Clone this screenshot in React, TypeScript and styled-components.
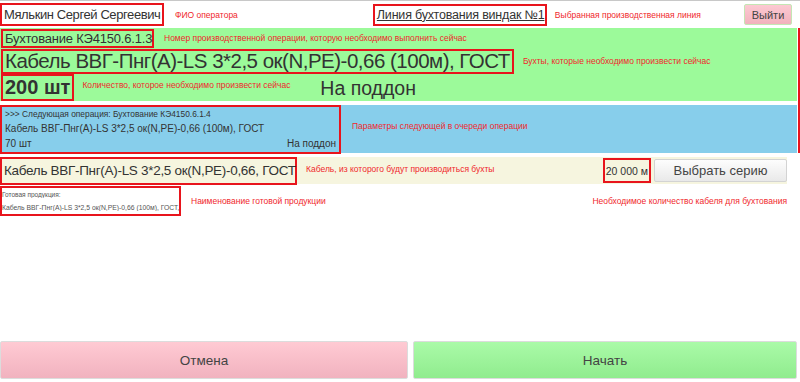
import React from 'react';
import styled, { createGlobalStyle } from 'styled-components';

const SANS = '"Liberation Sans", Arial, sans-serif';
const MARK = '#e8141c';

const GlobalStyle = createGlobalStyle`
  html, body {
    margin: 0;
    padding: 0;
    background: #fff;
  }
  body {
    font-family: ${SANS};
    color: #333;
  }
`;

const Page = styled.div`
  width: 800px;
  height: 382px;
  display: flex;
  flex-direction: column;
  box-sizing: border-box;
  border-top: 1px solid #c8c8c8;
  overflow: hidden;
`;

// red outline used by the annotations
const Marked = styled.div`
  box-sizing: border-box;
  border: 2px solid ${MARK};
  display: flex;
  flex-direction: column;
  justify-content: center;
  padding: 0 2px;
  flex-shrink: 0;
  white-space: nowrap;
`;

const Note = styled.span<{ $ml?: number; $mt?: number }>`
  font-family: ${SANS};
  font-size: 8.5px;
  color: #f0282c;
  white-space: nowrap;
  margin-left: ${p => p.$ml ?? 8}px;
  margin-top: ${p => p.$mt ?? 0}px;
`;

const RightNote = styled(Note)`
  margin-left: auto;
`;

const Header = styled.div`
  height: 25px;
  display: flex;
  align-items: center;
  padding-top: 1px;
`;

const Operator = styled(Marked)`
  font-size: 13px;
  letter-spacing: -0.4px;
  width: 164px;
  height: 23px;
`;

const LineName = styled(Marked)`
  font-size: 12.5px;
  letter-spacing: -0.2px;
  width: 174px;
  height: 22px;
  margin-left: 135px;
  text-decoration: underline;
`;

const ExitButton = styled.button`
  margin-left: auto;
  margin-right: 8px;
  width: 48px;
  height: 21px;
  font-family: ${SANS};
  font-size: 11px;
  color: #444;
  background: linear-gradient(#fcc9d2, #f2b2bd);
  border: 1px solid #c4e6b4;
  border-radius: 2px;
  padding: 0;
`;

const Panels = styled.div`
  display: flex;
  flex-direction: column;
  gap: 4px;
  margin-top: 1px;
  border-right: 2px solid ${MARK};
  padding-right: 1px;
`;

const GreenPanel = styled.div`
  background: #9cfa9a;
  height: 73px;
  display: flex;
  flex-direction: column;
  padding-left: 1px;
`;

const Row = styled.div<{ $h: number }>`
  height: ${p => p.$h}px;
  display: flex;
  align-items: center;
  flex-shrink: 0;
`;

const OperationCode = styled(Marked)`
  font-size: 13px;
  letter-spacing: -0.2px;
  width: 153px;
  height: 19px;
`;

const BigText = styled(Marked)<{ $bold?: boolean }>`
  font-size: ${p => (p.$bold ? 20 : 20.5)}px;
  letter-spacing: ${p => (p.$bold ? 0 : -0.5)}px;
  font-weight: ${p => (p.$bold ? 700 : 400)};
  height: ${p => (p.$bold ? 27 : 25)}px;
`;

const Destination = styled.span`
  font-size: 19.5px;
  margin-left: auto;
  margin-right: 381px;
  margin-top: 2px;
`;

const BluePanel = styled.div`
  background: #87ceeb;
  height: 48px;
  display: flex;
  align-items: center;
`;

const NextOp = styled(Marked)`
  width: 341px;
  height: 49px;
  justify-content: space-around;
  padding: 1px 3px;
`;

const SmallLine = styled.div<{ $size: number }>`
  font-size: ${p => p.$size}px;
  display: flex;
  justify-content: space-between;
`;

const BeigePanel = styled.div`
  width: 787px;
  height: 27px;
  background: #f6f5df;
  display: flex;
  align-items: center;
  margin-top: 4px;
`;

const SourceCable = styled(Marked)`
  font-size: 13.5px;
  letter-spacing: -0.3px;
  height: 28px;
  width: 297px;
`;

const Length = styled(Marked)`
  margin-left: auto;
  height: 25px;
  font-size: 10.5px;
  padding: 0 1px;
`;

const SeriesButton = styled.button`
  width: 133px;
  height: 23px;
  margin-left: 3px;
  font-family: ${SANS};
  font-size: 13px;
  color: #444;
  background: linear-gradient(#fdfdfd, #e9e9e9);
  border: 1px solid #d3d3d3;
  border-radius: 2px;
  padding: 0;
`;

const ProductRow = styled.div`
  display: flex;
  align-items: center;
  margin-top: 2px;
  width: 787px;
`;

const Product = styled(Marked)`
  width: 181px;
  height: 30px;
  padding: 0;
  justify-content: space-around;
  color: #555;
`;

const Tiny = styled.div<{ $size: number }>`
  font-size: ${p => p.$size}px;
  overflow: hidden;
`;

const Footer = styled.div`
  margin-top: auto;
  margin-bottom: 3px;
  display: flex;
  gap: 5px;
  padding-right: 3px;
`;

const ActionButton = styled.button<{ $kind: 'cancel' | 'start' }>`
  flex: ${p => (p.$kind === 'cancel' ? '0 0 408px' : '1')};
  height: 38px;
  font-family: ${SANS};
  font-size: 13.5px;
  color: #444;
  border: 1px solid #dcdcdc;
  border-radius: 2px;
  background: ${p =>
    p.$kind === 'cancel'
      ? 'linear-gradient(#ffcad3, #f1b2bf)'
      : 'linear-gradient(#aafaa8, #90ec8e)'};
`;

export default function App() {
  return (
    <>
      <GlobalStyle />
      <Page>
        <Header>
          <Operator>Мялькин Сергей Сергеевич</Operator>
          <Note $ml={11}>ФИО оператора</Note>
          <LineName>Линия бухтования виндак №1</LineName>
          <Note $ml={8}>Выбранная производственная линия</Note>
          <ExitButton>Выйти</ExitButton>
        </Header>

        <Panels>
          <GreenPanel>
            <Row $h={20}>
              <OperationCode>Бухтование КЭ4150.6.1.3</OperationCode>
              <Note $ml={10}>Номер производственной операции, которую необходимо выполнить сейчас</Note>
            </Row>
            <Row $h={26}>
              <BigText>Кабель ВВГ-Пнг(А)-LS 3*2,5 ок(N,PE)-0,66 (100м), ГОСТ</BigText>
              <Note $ml={9}>Бухты, которые необходимо произвести сейчас</Note>
            </Row>
            <Row $h={27}>
              <BigText $bold>200 шт</BigText>
              <Note $ml={8} $mt={-6}>Количество, которое необходимо произвести сейчас</Note>
              <Destination>На поддон</Destination>
            </Row>
          </GreenPanel>

          <BluePanel>
            <NextOp>
              <SmallLine $size={8.4}>&gt;&gt;&gt; Следующая операция: Бухтование КЭ4150.6.1.4</SmallLine>
              <SmallLine $size={10}>Кабель ВВГ-Пнг(А)-LS 3*2,5 ок(N,PE)-0,66 (100м), ГОСТ</SmallLine>
              <SmallLine $size={10}>
                <span>70 шт</span>
                <span>На поддон</span>
              </SmallLine>
            </NextOp>
            <Note $ml={11} $mt={-6}>Параметры следующей в очереди операции</Note>
          </BluePanel>
        </Panels>

        <BeigePanel>
          <SourceCable>Кабель ВВГ-Пнг(А)-LS 3*2,5 ок(N,PE)-0,66, ГОСТ</SourceCable>
          <Note $ml={9} $mt={-4}>Кабель, из которого будут производиться бухты</Note>
          <Length>20 000 м</Length>
          <SeriesButton>Выбрать серию</SeriesButton>
        </BeigePanel>

        <ProductRow>
          <Product>
            <Tiny $size={6.5}>Готовая продукция:</Tiny>
            <Tiny $size={6.8}>Кабель ВВГ-Пнг(А)-LS 3*2,5 ок(N,PE)-0,66 (100м), ГОСТ,</Tiny>
          </Product>
          <Note $ml={10}>Наименование готовой продукции</Note>
          <RightNote>Необходимое количество кабеля для бухтования</RightNote>
        </ProductRow>

        <Footer>
          <ActionButton $kind="cancel">Отмена</ActionButton>
          <ActionButton $kind="start">Начать</ActionButton>
        </Footer>
      </Page>
    </>
  );
}
